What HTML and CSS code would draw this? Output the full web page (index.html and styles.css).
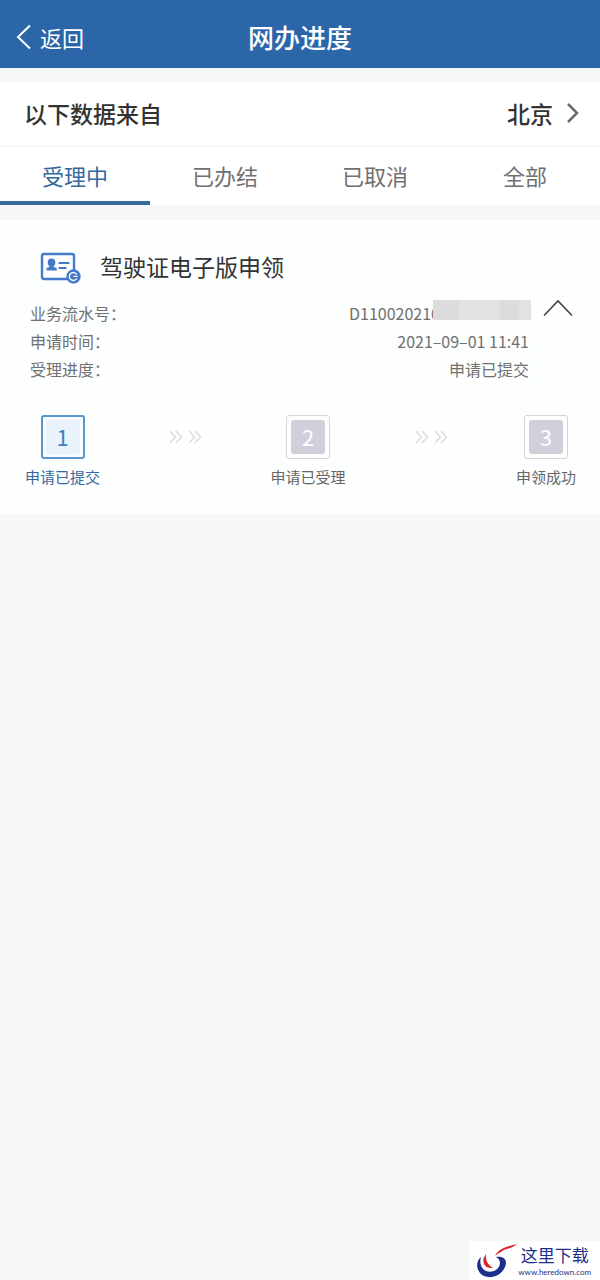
FILE: index.html
```html
<!DOCTYPE html>
<html lang="zh-CN">
  <head>
    <meta charset="UTF-8" />
    <meta name="viewport" content="width=device-width, initial-scale=1.0" />
    <title>网办进度</title>
    <link rel="stylesheet" href="styles.css">
  </head>

  <body>
    <header class="head">
      <button type="button" class="back">
        <svg width="16" height="26" viewBox="0 0 16 26" fill="none" stroke="currentColor" stroke-width="2" aria-hidden="true">
          <path d="M14 1.500L2 13l12 11.500" />
        </svg>
        返回
      </button>
      <h1>网办进度</h1>
    </header>

    <button type="button" class="source">
      <span>以下数据来自</span>
      <span class="city">
        北京
        <svg width="14" height="22" viewBox="0 0 14 22" fill="none" stroke="#6a6a6a" stroke-width="2.500" aria-hidden="true">
          <path d="M2 2l9 9-9 9" />
        </svg>
      </span>
    </button>

    <nav class="tabs">
      <button type="button" class="tab active">受理中</button>
      <button type="button" class="tab">已办结</button>
      <button type="button" class="tab">已取消</button>
      <button type="button" class="tab">全部</button>
    </nav>

    <main class="card">
      <div class="cardTitle">
        <svg width="42" height="36" viewBox="0 0 42 36" aria-hidden="true">
          <rect x="2" y="6" width="32" height="25" rx="2" fill="#fff" stroke="#447ac8" stroke-width="2.400" />
          <ellipse cx="11.500" cy="14.500" rx="3.800" ry="4" fill="#447ac8" />
          <path d="M9.300 16h4.400v3l3 1v2.500H6.500V20l2.800-1z" fill="#447ac8" />
          <path d="M18.500 15h11M18.500 20h8" stroke="#447ac8" stroke-width="2" />
          <circle cx="33.500" cy="28.500" r="7.200" fill="#447ac8" />
          <path d="M36.800 26.500a4 4 0 1 0 0 4M33.500 28.300h4.300" fill="none" stroke="#fff" stroke-width="1.300" />
        </svg>
        <h2>驾驶证电子版申领</h2>
      </div>

      <div class="detail">
        <dl class="info">
          <div class="row">
            <dt>业务流水号：</dt>
            <dd>D110020210<span class="mosaic"></span></dd>
          </div>
          <div class="row">
            <dt>申请时间：</dt>
            <dd>2021–09–01 11:41</dd>
          </div>
          <div class="row">
            <dt>受理进度：</dt>
            <dd>申请已提交</dd>
          </div>
        </dl>
        <button type="button" class="fold" aria-label="收起">
          <svg width="32" height="18" viewBox="0 0 32 18" fill="none" stroke="#444" stroke-width="1.600" aria-hidden="true">
            <path d="M2 16.500L16 2l14 14.500" />
          </svg>
        </button>
      </div>

      <ol class="steps">
        <li class="step current">
          <span class="box"><span class="num">1</span></span>
          <span class="name">申请已提交</span>
        </li>
        <li class="arrow" aria-hidden="true">
          <svg width="34" height="14" viewBox="0 0 34 14" fill="none" stroke="#dcdce2" stroke-width="1.500">
            <path d="M2 1l5.500 6L2 13M8 1l5.500 6L8 13M21 1l5.500 6-5.500 6M27 1l5.500 6-5.500 6" />
          </svg>
        </li>
        <li class="step">
          <span class="box"><span class="num">2</span></span>
          <span class="name">申请已受理</span>
        </li>
        <li class="arrow" aria-hidden="true">
          <svg width="34" height="14" viewBox="0 0 34 14" fill="none" stroke="#dcdce2" stroke-width="1.500">
            <path d="M2 1l5.500 6L2 13M8 1l5.500 6L8 13M21 1l5.500 6-5.500 6M27 1l5.500 6-5.500 6" />
          </svg>
        </li>
        <li class="step">
          <span class="box"><span class="num">3</span></span>
          <span class="name">申领成功</span>
        </li>
      </ol>
    </main>

    <div class="mark">
      <svg width="42" height="36" viewBox="0 0 42 36" aria-hidden="true">
        <path d="M5 14C-1 19 0 29 8 33C18 37 29 30 30 20C30 16 27 13 20 14C26 17 25 25 18 28C10 31 2 25 5 14z" fill="#1d2f8c" />
        <path d="M10 11c-5 6-3 15 7 14-5-3-8-8-7-14z" fill="#d8232a" />
        <path d="M19 13C23 5 30 4 41 1c-5 5-12 4-16 8-2 1-4 2-6 4z" fill="#d8232a" />
      </svg>
      <div class="markText">
        <span class="markName">这里下载</span>
        <span class="markUrl">www.heredown.com</span>
      </div>
    </div>
  </body>
</html>
```
FILE: styles.css
```css
* {
  box-sizing: border-box;
}
body {
  margin: 0;
  min-height: 100vh;
  background-color: #f5f8f7;
  color: #333;
  font-family: "Noto Sans CJK SC", sans-serif;
}
button {
  border: none;
  padding: 0;
  background: none;
  color: inherit;
  font-family: inherit;
  cursor: pointer;
}
svg {
  display: block;
  flex: none;
}
h1,
h2,
dl,
dd,
ol {
  margin: 0;
  padding: 0;
}

.head {
  display: grid;
  grid-template-columns: 1fr auto 1fr;
  align-items: center;
  height: 68px;
  padding: 5px 16px 0;
  background-color: #2b66a8;
  color: #fff;
}
.head h1 {
  font-size: 26px;
  font-weight: 500;
  line-height: 36px;
}
.back {
  display: flex;
  align-items: center;
  gap: 8px;
  font-size: 22px;
  line-height: 32px;
}

.source {
  display: flex;
  justify-content: space-between;
  align-items: center;
  width: 100%;
  height: 63px;
  margin-top: 14px;
  padding: 0 20px 2px 24px;
  background-color: #fff;
  font-size: 23px;
  font-weight: 500;
}
.city {
  display: flex;
  align-items: center;
  gap: 13px;
}

.tabs {
  display: flex;
  border-top: 2px solid #f5f7f8;
  background-color: #fff;
}
.tab {
  flex: 1;
  height: 58px;
  padding-top: 2px;
  border-bottom: 4px solid transparent;
  color: #707070;
  font-size: 22px;
}
.tab.active {
  border-color: #35689c;
  color: #35689c;
}

.card {
  margin-top: 15px;
  padding: 28px 24px 26px 25px;
  background-color: #fdfefe;
}
.cardTitle {
  display: flex;
  align-items: center;
  gap: 18px;
  padding-left: 15px;
}
.cardTitle h2 {
  font-size: 23px;
  font-weight: 400;
  line-height: 36px;
}

.detail {
  display: flex;
  align-items: flex-start;
  gap: 13px;
  margin-top: 15px;
  padding: 0 2px 0 5px;
}
.info {
  flex: 1;
  color: #707070;
  font-size: 16px;
  line-height: 28px;
}
.row {
  display: flex;
  justify-content: space-between;
}
.info dd {
  display: flex;
  align-items: center;
}
.mosaic {
  width: 98px;
  height: 20px;
  margin: -6px -2px 0 -7px;
  background: linear-gradient(90deg, #dcdcdc 27%, #e2e2e2 27%, #e2e2e2 68%, #dcdcdc 68%, #dcdcdc 88%, #e2e2e2 88%);
}

.steps {
  display: flex;
  justify-content: space-between;
  margin-top: 32px;
  list-style: none;
}
.step {
  display: flex;
  flex-direction: column;
  align-items: center;
  gap: 7px;
  color: #666;
}
.box {
  width: 44px;
  height: 44px;
  padding: 4px;
  border: 1px solid #d4d4d8;
  border-radius: 3px;
}
.num {
  display: block;
  height: 34px;
  border-radius: 3px;
  background-color: #d0cfda;
  color: #fff;
  font-size: 22px;
  line-height: 32px;
  text-align: center;
}
.name {
  font-size: 15px;
  line-height: 22px;
}
.current {
  color: #35689c;
}
.current .box {
  padding: 3px;
  border: 2px solid #5b96c8;
  background-color: #f5fbff;
}
.current .num {
  background-color: #eaf2fc;
  color: #3f83bd;
}
.arrow {
  padding-top: 15px;
}

.mark {
  position: fixed;
  right: 0;
  bottom: 0;
  display: flex;
  align-items: center;
  padding: 0 9px 0 7px;
  height: 39px;
  background-color: #fff;
  color: #1d2f8c;
}
.markText {
  display: flex;
  flex-direction: column;
  align-items: center;
}
.markName {
  font-size: 17px;
  line-height: 22px;
}
.markUrl {
  font-family: Lato, sans-serif;
  font-size: 8px;
  line-height: 12px;
}
```
